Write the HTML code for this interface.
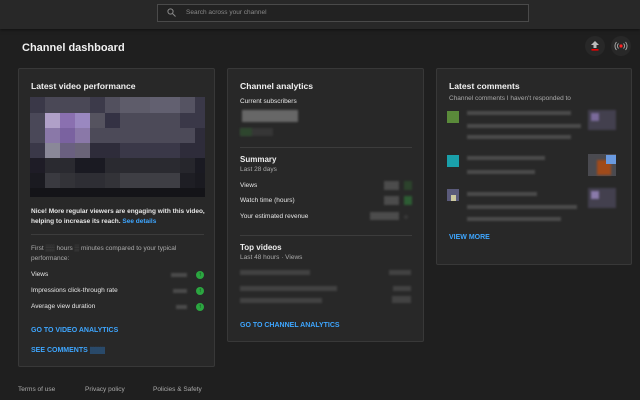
<!DOCTYPE html>
<html><head><meta charset="utf-8"><style>
*{margin:0;padding:0;box-sizing:border-box}
body{width:640px;height:400px;background:#1f1f1f;font-family:"Liberation Sans",sans-serif;color:#eee;position:relative;overflow:hidden}
.a{position:absolute}
.top{left:0;top:0;width:640px;height:29px;background:#282828;box-shadow:0 1px 3px rgba(0,0,0,.5)}
.search{left:157px;top:4px;width:372px;height:18px;border:1px solid #4a4a4a;background:#222}
.card{background:#282828;border:1px solid #383838;border-radius:2px}
.h{font-size:8.6px;color:#f1f1f1;font-weight:bold}
.s{font-size:6.5px;color:#aaa}
.t{font-size:6.5px;color:#e6e6e6}
.b{font-size:7px;color:#3ea6ff;font-weight:bold}
.blur{background:#555;filter:blur(1px);opacity:.8}
.hr{height:1px;background:#3c3c3c}
.up{width:8px;height:8px;border-radius:50%;background:#2ba640;color:#111;font-size:6px;text-align:center;line-height:8px;font-weight:bold}
.g{display:grid;grid-template-columns:repeat(12,15px);grid-template-rows:16px 15px 15px 15px 15px 15px 9px}
.g div{width:15px}
</style></head><body>
<div class="a top"></div>
<div class="a search"></div>
<svg class="a" style="left:167px;top:8px" width="9" height="9" viewBox="0 0 9 9"><circle cx="3.5" cy="3.5" r="2.6" fill="none" stroke="#888" stroke-width="1"/><path d="M5.5 5.5L8.5 8.5" stroke="#888" stroke-width="1"/></svg>
<div class="a" style="left:186px;top:9px;font-size:6.5px;color:#888">Search across your channel</div>

<div class="a" style="left:22px;top:42px;font-size:11px;font-weight:bold;color:#f1f1f1">Channel dashboard</div>
<div class="a" style="left:585px;top:36px;width:20px;height:20px;border-radius:50%;background:#282828"></div>
<svg class="a" style="left:590px;top:40px" width="10" height="12" viewBox="0 0 10 12"><path d="M5 1L1 5h2.5v3h3V5H9z" fill="#bbb"/><rect x="1.5" y="9" width="7" height="1.6" fill="#e00"/></svg>
<div class="a" style="left:611px;top:36px;width:20px;height:20px;border-radius:50%;background:#282828"></div>
<svg class="a" style="left:614px;top:41px" width="14" height="10" viewBox="0 0 14 10"><circle cx="7" cy="5" r="1.6" fill="#f22"/><path d="M4.5 2.5a3.5 3.5 0 0 0 0 5M9.5 2.5a3.5 3.5 0 0 1 0 5M2.5 1a6 6 0 0 0 0 8M11.5 1a6 6 0 0 1 0 8" stroke="#aaa" fill="none" stroke-width=".9"/></svg>

<!-- card1 -->
<div class="a card" style="left:18px;top:68px;width:197px;height:299px"></div>
<div class="a h" style="left:31px;top:81px">Latest video performance</div>
<div class="a g" style="left:30px;top:97px">
<div style="background:#3a3848"></div><div style="background:#4a4856"></div><div style="background:#4a4856"></div><div style="background:#4a4856"></div><div style="background:#3c3a4a"></div><div style="background:#52505e"></div><div style="background:#5e5c6a"></div><div style="background:#5e5c6a"></div><div style="background:#626070"></div><div style="background:#626070"></div><div style="background:#555362"></div><div style="background:#3a3848;width:10px"></div>
<div style="background:#4a4858"></div><div style="background:#b0a0c8"></div><div style="background:#8a70b0"></div><div style="background:#9a88c0"></div><div style="background:#55535f"></div><div style="background:#343244"></div><div style="background:#4c4a58"></div><div style="background:#4c4a58"></div><div style="background:#4c4a58"></div><div style="background:#4c4a58"></div><div style="background:#3a3848"></div><div style="background:#3a3848;width:10px"></div>
<div style="background:#4a4858"></div><div style="background:#8a78a8"></div><div style="background:#7a62a0"></div><div style="background:#8a78a8"></div><div style="background:#4c4a58"></div><div style="background:#4c4a58"></div><div style="background:#4c4a58"></div><div style="background:#4c4a58"></div><div style="background:#4c4a58"></div><div style="background:#4c4a58"></div><div style="background:#4c4a58"></div><div style="background:#2e2c3a;width:10px"></div>
<div style="background:#3a3848"></div><div style="background:#8a8898"></div><div style="background:#6a6080"></div><div style="background:#6a6478"></div><div style="background:#2e2c3a"></div><div style="background:#2e2c3a"></div><div style="background:#3a3848"></div><div style="background:#3a3848"></div><div style="background:#3a3848"></div><div style="background:#3a3848"></div><div style="background:#2e2c3a"></div><div style="background:#2e2c3a;width:10px"></div>
<div style="background:#1e1c26"></div><div style="background:#2a2a30"></div><div style="background:#2a2a30"></div><div style="background:#1a1a22"></div><div style="background:#1a1a22"></div><div style="background:#2a2a30"></div><div style="background:#2a2a30"></div><div style="background:#2a2a30"></div><div style="background:#2a2a30"></div><div style="background:#2a2a30"></div><div style="background:#26262c"></div><div style="background:#1a1a22;width:10px"></div>
<div style="background:#1a1a20"></div><div style="background:#3a3a40"></div><div style="background:#333338"></div><div style="background:#2e2e34"></div><div style="background:#2e2e34"></div><div style="background:#333338"></div><div style="background:#3e3e44"></div><div style="background:#3e3e44"></div><div style="background:#3e3e44"></div><div style="background:#3e3e44"></div><div style="background:#1e1e24"></div><div style="background:#1a1a20;width:10px"></div>
<div style="background:#141418"></div><div style="background:#141418"></div><div style="background:#141418"></div><div style="background:#141418"></div><div style="background:#141418"></div><div style="background:#141418"></div><div style="background:#141418"></div><div style="background:#141418"></div><div style="background:#141418"></div><div style="background:#141418"></div><div style="background:#141418"></div><div style="background:#141418;width:10px"></div>
</div>
<div class="a t" style="left:31px;top:207px;width:180px;line-height:10px;font-weight:bold">Nice! More regular viewers are engaging with this video, helping to increase its reach. <span style="color:#3ea6ff">See details</span></div>
<div class="a hr" style="left:31px;top:234px;width:173px"></div>
<div class="a s" style="left:31px;top:244px;width:175px;line-height:10px">First <span style="color:#555">▒▒</span> hours <span style="color:#555">▒</span> minutes compared to your typical performance:</div>
<div class="a t" style="left:31px;top:271px">Views</div>
<div class="a blur" style="left:171px;top:273px;width:16px;height:4px"></div><div class="a up" style="left:196px;top:271px">↑</div>
<div class="a t" style="left:31px;top:287px">Impressions click-through rate</div>
<div class="a blur" style="left:173px;top:289px;width:14px;height:4px"></div><div class="a up" style="left:196px;top:287px">↑</div>
<div class="a t" style="left:31px;top:303px">Average view duration</div>
<div class="a blur" style="left:176px;top:305px;width:11px;height:4px"></div><div class="a up" style="left:196px;top:303px">↑</div>
<div class="a b" style="left:31px;top:327px">GO TO VIDEO ANALYTICS</div>
<div class="a b" style="left:31px;top:347px">SEE COMMENTS <span style="background:#2a4a6a;color:#2a4a6a">▒▒▒</span></div>

<!-- card2 -->
<div class="a card" style="left:227px;top:68px;width:197px;height:274px"></div>
<div class="a h" style="left:240px;top:81px">Channel analytics</div>
<div class="a t" style="left:240px;top:98px">Current subscribers</div>
<div class="a blur" style="left:242px;top:110px;width:56px;height:12px;background:#777"></div>
<div class="a blur" style="left:240px;top:128px;width:33px;height:8px;background:#3a3a3a"></div>
<div class="a blur" style="left:240px;top:128px;width:12px;height:8px;background:#2d4a2d"></div>
<div class="a hr" style="left:240px;top:147px;width:172px"></div>
<div class="a" style="left:240px;top:155px;font-size:8px;font-weight:bold;color:#eee">Summary</div>
<div class="a s" style="left:240px;top:166px">Last 28 days</div>
<div class="a t" style="left:240px;top:182px">Views</div>
<div class="a blur" style="left:384px;top:181px;width:15px;height:9px"></div><div class="a blur" style="left:404px;top:181px;width:8px;height:9px;background:#2d4a2d"></div>
<div class="a t" style="left:240px;top:197px">Watch time (hours)</div>
<div class="a blur" style="left:384px;top:196px;width:15px;height:9px"></div><div class="a blur" style="left:404px;top:196px;width:8px;height:9px;background:#2f6a37"></div>
<div class="a t" style="left:240px;top:213px">Your estimated revenue</div>
<div class="a blur" style="left:370px;top:212px;width:29px;height:8px"></div><div class="a blur" style="left:404px;top:215px;width:4px;height:4px;background:#3a3a3a"></div>
<div class="a hr" style="left:240px;top:235px;width:172px"></div>
<div class="a" style="left:240px;top:243px;font-size:8px;font-weight:bold;color:#eee">Top videos</div>
<div class="a s" style="left:240px;top:254px">Last 48 hours · Views</div>
<div class="a blur" style="left:240px;top:270px;width:70px;height:5px;background:#4a4a4a"></div><div class="a blur" style="left:389px;top:270px;width:22px;height:5px;background:#4a4a4a"></div>
<div class="a blur" style="left:240px;top:286px;width:97px;height:5px;background:#4a4a4a"></div><div class="a blur" style="left:393px;top:286px;width:18px;height:5px;background:#4a4a4a"></div>
<div class="a blur" style="left:240px;top:298px;width:82px;height:5px;background:#4a4a4a"></div><div class="a blur" style="left:392px;top:296px;width:19px;height:7px;background:#4a4a4a"></div>
<div class="a b" style="left:240px;top:322px">GO TO CHANNEL ANALYTICS</div>

<!-- card3 -->
<div class="a card" style="left:436px;top:68px;width:196px;height:197px"></div>
<div class="a h" style="left:449px;top:81px">Latest comments</div>
<div class="a s" style="left:449px;top:95px">Channel comments I haven't responded to</div>
<div class="a" style="left:447px;top:111px;width:12px;height:12px;background:#5a8a3a"></div>
<div class="a blur" style="left:467px;top:111px;width:104px;height:4px"></div><div class="a blur" style="left:467px;top:124px;width:114px;height:4px"></div><div class="a blur" style="left:467px;top:135px;width:104px;height:4px"></div>
<div class="a blur" style="left:588px;top:110px;width:28px;height:20px;background:#4a4658"></div><div class="a" style="left:591px;top:113px;width:8px;height:8px;background:#7a6a9a;filter:blur(1px)"></div>
<div class="a" style="left:447px;top:155px;width:12px;height:12px;background:#1aa0aa"></div>
<div class="a blur" style="left:467px;top:156px;width:78px;height:4px"></div><div class="a blur" style="left:467px;top:170px;width:68px;height:4px"></div>
<div class="a" style="left:588px;top:154px;width:28px;height:22px;background:#4a4a50"></div><div class="a" style="left:597px;top:160px;width:14px;height:15px;background:#a04a1a;filter:blur(1px)"></div><div class="a" style="left:606px;top:155px;width:10px;height:9px;background:#6a9ae0"></div>
<div class="a" style="left:447px;top:189px;width:12px;height:12px;background:#5a5a7a"></div><div class="a" style="left:451px;top:195px;width:5px;height:6px;background:#ccc8a0"></div>
<div class="a blur" style="left:467px;top:192px;width:70px;height:4px"></div><div class="a blur" style="left:467px;top:205px;width:110px;height:4px"></div><div class="a blur" style="left:467px;top:217px;width:94px;height:4px"></div>
<div class="a blur" style="left:588px;top:188px;width:28px;height:20px;background:#4a4658"></div><div class="a" style="left:591px;top:191px;width:8px;height:8px;background:#8a7aaa;filter:blur(1px)"></div>
<div class="a b" style="left:449px;top:234px">VIEW MORE</div>

<div class="a s" style="left:18px;top:386px">Terms of use</div>
<div class="a s" style="left:85px;top:386px">Privacy policy</div>
<div class="a s" style="left:153px;top:386px">Policies &amp; Safety</div>
</body></html>
